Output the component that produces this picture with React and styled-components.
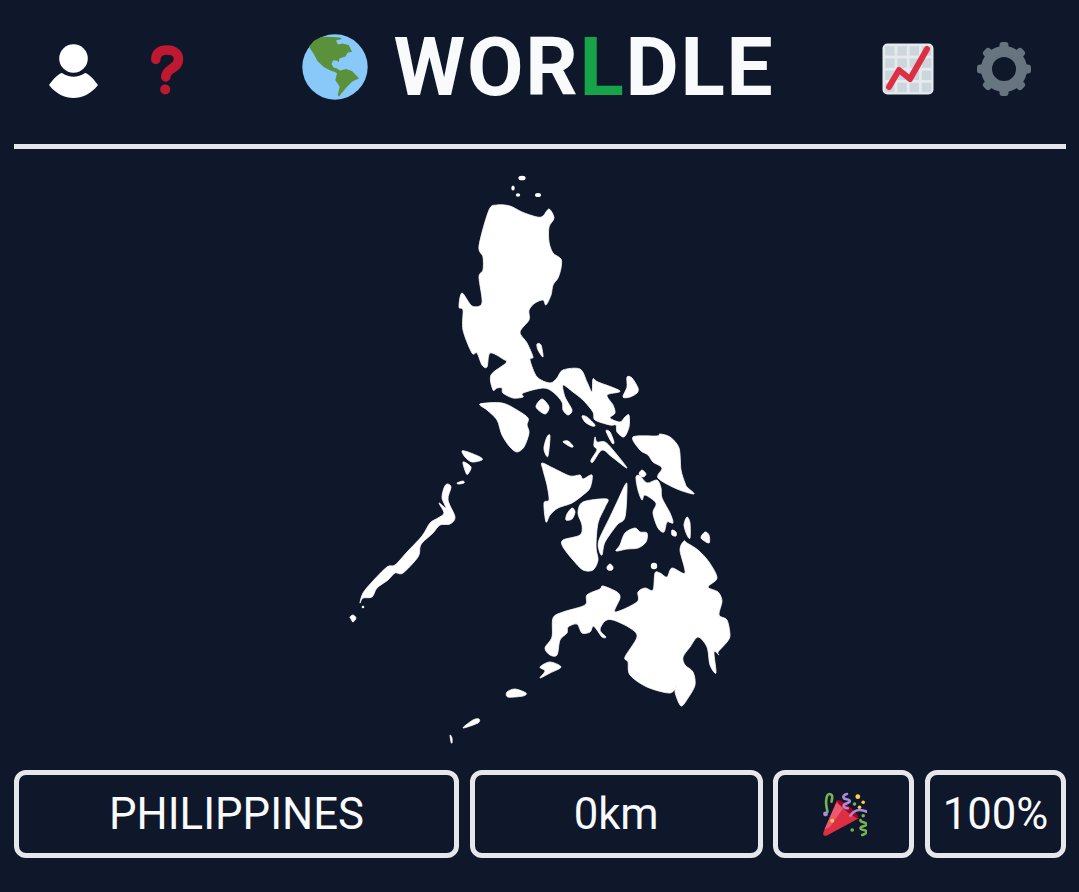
import React from "react";
import styled, { createGlobalStyle } from "styled-components";

const Global = createGlobalStyle`
  html, body { margin: 0; padding: 0; background: #0f172a; }
  body { font-family: Roboto, "Liberation Sans", sans-serif; color: #f8fafc; }
`;

const Page = styled.main`
  width: 1079px;
  height: 892px;
  box-sizing: border-box;
  padding: 0 13px 0 14px;
  display: flex;
  flex-direction: column;
  overflow: hidden;
`;

const Header = styled.header`
  height: 149px;
  box-sizing: border-box;
  border-bottom: 5px solid #e5e7eb;
  display: flex;
  align-items: center;
  justify-content: space-between;
  padding: 0 34px 10px 34px;
`;

const IconGroup = styled.div`
  display: flex;
  align-items: center;
  gap: ${(p) => p.$gap}px;
  margin-top: ${(p) => p.$drop}px;
`;

const Brand = styled.div`
  display: flex;
  align-items: center;
  gap: 26px;
  margin-left: 8px;
`;

const Title = styled.h1`
  margin: 0;
  font-family: Roboto, sans-serif;
  font-weight: 700;
  font-size: 82px;
  line-height: 1;
  letter-spacing: 1.7px;
  color: #f8fafc;
`;

const Accent = styled.span`
  color: #16a34a;
`;

const MapArea = styled.div`
  height: 621px;
  display: flex;
  justify-content: center;
`;

const MapSvg = styled.svg`
  display: block;
  width: 400px;
  height: 621px;
  flex: none;
`;

const Row = styled.section`
  display: grid;
  grid-template-columns: 445px 293px 141px 141px;
  justify-content: space-between;
`;

const Cell = styled.div`
  height: 88px;
  box-sizing: border-box;
  border: 5px solid #e5e7eb;
  border-radius: 12px;
  display: flex;
  align-items: center;
  justify-content: center;
  font-size: 43.7px;
  color: #f8fafc;
`;

const shapes = [
  // Luzon + Bicol
  "489,210 497,205 510,206 522,212 537,217 543,216 549,209 554,218 549,227 549,242 553,253 561,259 561,268 558,278 553,285 551,295 546,305 543,300 535,303 529,310 529,320 520,332 527,343 533,357 530,360 537,377 550,383 557,378 563,370 580,369 587,382 592,392 593,379 598,382 620,391 607,395 613,405 615,413 610,418 620,422 625,417 629,415 629,427 624,437 617,432 616,425 610,425 595,420 593,412 583,400 573,392 563,385 565,397 572,410 568,415 563,410 562,402 553,392 543,388 523,393 523,397 513,398 503,393 502,388 497,388 493,390 491,375 506,363 503,359 490,353 487,367 482,365 477,353 472,353 463,330 463,310 459,307 462,293 472,306 482,303 479,277 483,270 483,257 479,246",
  // Mindoro
  "480,404 502,403 517,410 528,418 527,425 529,433 524,447 517,452 510,447 502,435 497,420 487,410",
  "536,407 542,399 549,407 545,414",
  "582,416 587,417 595,425 592,426 585,422",
  "606,431 610,432 614,442 612,443",
  "627,377 632,378 638,388 637,393 630,397 623,397 627,387",
  "537,344 541,345 543,357 538,350",
  // Masbate
  "595,437 597,442 605,442 613,450 627,468 612,457 602,450 593,462 591,460 597,450 594,446",
  // Samar
  "633,437 657,436 660,434 670,437 679,448 681,470 685,483 687,487 694,494 677,489 658,478 662,468 653,462 648,455 640,450",
  "642,470 646,474 643,477 639,474",
  // Leyte
  "636,477 640,476 647,483 657,480 661,488 662,498 670,513 673,523 667,522 664,532 658,528 653,513 656,503 645,495 642,500 638,490",
  "672,530 676,532 676,536 672,535",
  "687,517 690,523 690,538 687,535 684,525",
  "705,532 709,535 709,543 701,538",
  // Panay
  "542,463 553,468 570,476 580,475 583,479 592,475 590,488 583,495 572,503 558,508 550,515 546,522 544,503 549,500 547,485 543,470",
  "572,508 575,512 572,519 566,520 567,514",
  // Negros
  "583,502 607,499 605,507 598,523 596,547 598,560 593,570 583,570 573,560 563,547 563,540 580,535 582,525 578,513",
  // Cebu
  "625,485 627,486 625,517 617,525 605,542 602,555 599,550 599,540 610,517 618,500",
  // Bohol
  "635,528 640,532 647,533 646,542 638,548 627,549 616,551 620,545 625,533",
  "547,437 550,436 548,456 545,453 544,447",
  "563,442 568,441 573,446 571,447",
  "607,567 610,564 613,567 612,570 608,570",
  // Mindanao
  "680,550 684,541 687,543 698,550 709,562 717,578 708,587 718,592 722,601 719,615 727,620 730,635 727,642 718,652 719,655 714,652 716,673 710,665 707,647 698,637 690,647 683,657 685,665 693,672 695,685 688,698 681,706 675,692 677,685 670,693 647,687 630,675 628,662 625,657 637,637 630,628 613,620 605,621 600,630 606,637 602,637 597,630 593,626 590,632 582,633 577,624 568,627 567,633 560,640 557,655 550,655 545,648 552,637 553,618 563,612 585,605 587,595 600,589 603,586 617,592 620,598 615,612 637,602 638,592 645,588 653,590 655,573 660,573 667,577 672,568 685,573",
  // Sulu
  "540,667 550,662 561,667 550,673 540,678 545,671",
  "507,692 515,689 526,693 523,696 508,697",
  "463,728 473,720 479,719 478,723",
  "450,735 452,738 452,743 451,742",
  // Palawan
  "447,484 451,487 448,500 455,517 450,524 440,525 433,533 423,542 420,547 418,557 403,573 395,573 388,580 377,588 372,597 363,598 360,603 363,593 372,582 387,567 395,565 407,552 422,536 430,523 438,518 444,513 439,503 446,508 442,498 444,488",
  "350,617 353,615 356,618 353,622 351,619",
  "462,451 468,452 480,457 482,460 472,462 465,457",
  "463,462 471,467 468,474 466,473",
  "457,483 463,481 464,483 459,484",
];

const dots = [
  [522, 178, 3.6, 2.3],
  [513, 188, 1.7, 2.5],
  [518, 195, 2.2, 1.7],
  [538, 195, 3, 2.1],
  [654, 566, 3.2, 3.2],
  [363, 607, 1.3, 1.3],
];

const ProfileIcon = () => (
  <svg width="52" height="56" viewBox="0 0 52 56">
    <circle cx="25.5" cy="15.5" r="14.3" fill="#fff" />
    <path d="M1 42 C7 34 11 30.5 14 30 C22 35 29 35 37 30 C40 30.5 44 34 50 42 C43 51 34 55 25.5 55 C17 55 8 51 1 42 Z" fill="#fff" />
  </svg>
);

const HelpIcon = () => (
  <svg width="36" height="52" viewBox="0 0 36 52">
    <path d="M5.8 14.5 C5.8 8 10.5 5 17 5 C24 5 28.5 8.5 28.5 14 C28.5 20 24 22 20.5 24.5 C17 27 15.7 29 15.7 32" fill="none" stroke="#be1931" strokeWidth="9.5" strokeLinecap="round" />
    <circle cx="15.2" cy="44.4" r="5" fill="#be1931" />
  </svg>
);

const GlobeIcon = () => (
  <svg width="66" height="66" viewBox="0 0 66 66">
    <circle cx="33" cy="33" r="32.7" fill="#88c9f9" />
    <path fill="#5c913b" d="M7 12.7 L11.7 7 L19 3 L25 2.7 L38 3.6 L40 5 L34 6.5 L36 10.5 L40.5 9.5 L46.7 11 L50 17.7 L45.5 18.7 L43.5 22.5 L37.5 24.5 L36.7 28 L34.5 26.5 L31 26.5 L29.5 30 L31.5 33.5 L35 34.5 L38 36.5 L44 35 L50 37 L57 44.3 L50 47.7 L45 52.7 L36.7 62.7 L35.7 61 L37.7 52.7 L33.3 46 L35 39.3 L33 38 L28.3 36.5 L21.7 33 L15.5 27 L11.7 20 Z" />
  </svg>
);

const ChartIcon = () => {
  const cells = [];
  for (let r = 0; r < 4; r++)
    for (let c = 0; c < 4; c++)
      cells.push(<rect key={`${r}-${c}`} x={3.2 + c * 12.2} y={3.2 + r * 12.2} width="9.4" height="9.4" fill="#ccd6dd" />);
  return (
    <svg width="52" height="52" viewBox="0 0 52 52">
      <rect x="0.5" y="0.5" width="51" height="51" rx="5" fill="#e6e9ed" />
      {cells}
      <path d="M7 44 L17 27 L28 36 L45 6" fill="none" stroke="#dd2e44" strokeWidth="6" strokeLinecap="round" strokeLinejoin="round" />
    </svg>
  );
};

const GearIcon = () => {
  const teeth = [0, 45, 90, 135, 180, 225, 270, 315];
  return (
    <svg width="56" height="54" viewBox="0 0 56 54">
      <g transform="translate(28 27)">
        {teeth.map((a) => (
          <rect key={a} x="-4.5" y="-27" width="9" height="14" rx="3" fill="#66757f" transform={`rotate(${a})`} />
        ))}
        <circle r="17.5" fill="none" stroke="#66757f" strokeWidth="11" />
      </g>
    </svg>
  );
};

const PartyIcon = () => (
  <svg width="46" height="46" viewBox="0 0 46 46">
    <path d="M16.2 9 L37.8 27.3 L6 44.6 C3 45.6 1.6 43.6 2.4 41.4 Z" fill="#dd2e44" />
    <path d="M3.4 38.6 L15.4 11.5 L22 17.5 L9 36 Z" fill="#ea596e" />
    <path d="M16 9.4 C18 8 24 11.6 29.5 16.6 C35 21.6 38.6 26 37.6 27.6 C36 27.6 30 24 25 19.4 C20 14.8 16 11 16 9.4 Z" fill="#a0041e" />
    <path d="M6.5 20.7 C5.4 16 4.8 12 5.2 9 C5.6 5 7 3 8.6 3 C10.4 3 11.4 4.6 11.2 6.6 C11.1 8.4 10.8 9.6 10.5 10.7" fill="none" stroke="#77b255" strokeWidth="2.6" strokeLinecap="round" />
    <circle cx="4.5" cy="23" r="2.4" fill="#aa8dd8" />
    <circle cx="11.2" cy="29.7" r="2" fill="#ffcc4d" />
    <path d="M26 3 C23 3.5 21.5 6 22.8 7.3 C24.2 8.6 28.5 7.8 28.8 10 C29 12.2 24 12 22.8 14 C22 15.6 24 17.4 26.8 17.3" fill="none" stroke="#aa8dd8" strokeWidth="2.6" strokeLinecap="round" />
    <path d="M29.5 24.7 C31.5 21.4 34.6 19.4 37.8 19 C40.6 18.8 43.6 19.6 46 20.7" fill="none" stroke="#aa8dd8" strokeWidth="2.6" strokeLinecap="round" />
    <circle cx="36.8" cy="5.7" r="2.4" fill="#ffcc4d" />
    <circle cx="42.2" cy="11.3" r="1.8" fill="#ffcc4d" />
    <circle cx="38.5" cy="16.3" r="1.8" fill="#ffcc4d" />
    <circle cx="33.5" cy="13" r="1.8" fill="#77b255" />
    <circle cx="42.2" cy="24.7" r="1.8" fill="#77b255" />
    <circle cx="31.2" cy="39" r="1.8" fill="#77b255" />
    <path d="M39.5 29 C38.6 31.4 45.6 31 45.5 33.3 C45.4 35.6 39.4 35 39.5 37.3 C39.6 39.4 45.6 38.6 45.5 40.7 C45.4 42.8 42.6 43.4 41.2 44" fill="none" stroke="#77b255" strokeWidth="2.6" strokeLinecap="round" />
  </svg>
);

function smooth(str) {
  const p = str.split(" ").map((s) => s.split(",").map(Number));
  const n = p.length;
  let d = `M${p[0][0]} ${p[0][1]}`;
  for (let i = 0; i < n; i++) {
    const a = p[(i - 1 + n) % n], b = p[i], c = p[(i + 1) % n], e = p[(i + 2) % n];
    const k = 0.15;
    d += `C${b[0] + (c[0] - a[0]) * k} ${b[1] + (c[1] - a[1]) * k} ${c[0] - (e[0] - b[0]) * k} ${c[1] - (e[1] - b[1]) * k} ${c[0]} ${c[1]}`;
  }
  return d + "Z";
}

export default function App() {
  return (
    <Page>
      <Global />
      <Header>
        <IconGroup $gap={50} $drop={8}>
          <ProfileIcon />
          <HelpIcon />
        </IconGroup>
        <Brand>
          <GlobeIcon />
          <Title>
            WOR<Accent>L</Accent>DLE
          </Title>
        </Brand>
        <IconGroup $gap={42} $drop={4}>
          <ChartIcon />
          <GearIcon />
        </IconGroup>
      </Header>
      <MapArea>
        <MapSvg viewBox="340 149 400 621">
          {shapes.map((s, i) => (
            <path key={i} d={smooth(s)} fill="#fff" stroke="#fff" strokeWidth="0.8" strokeLinejoin="round" />
          ))}
          {dots.map(([x, y, rx, ry], i) => (
            <ellipse key={i} cx={x} cy={y} rx={rx} ry={ry} fill="#fff" />
          ))}
        </MapSvg>
      </MapArea>
      <Row>
        <Cell>PHILIPPINES</Cell>
        <Cell>0km</Cell>
        <Cell><PartyIcon /></Cell>
        <Cell>100%</Cell>
      </Row>
    </Page>
  );
}
